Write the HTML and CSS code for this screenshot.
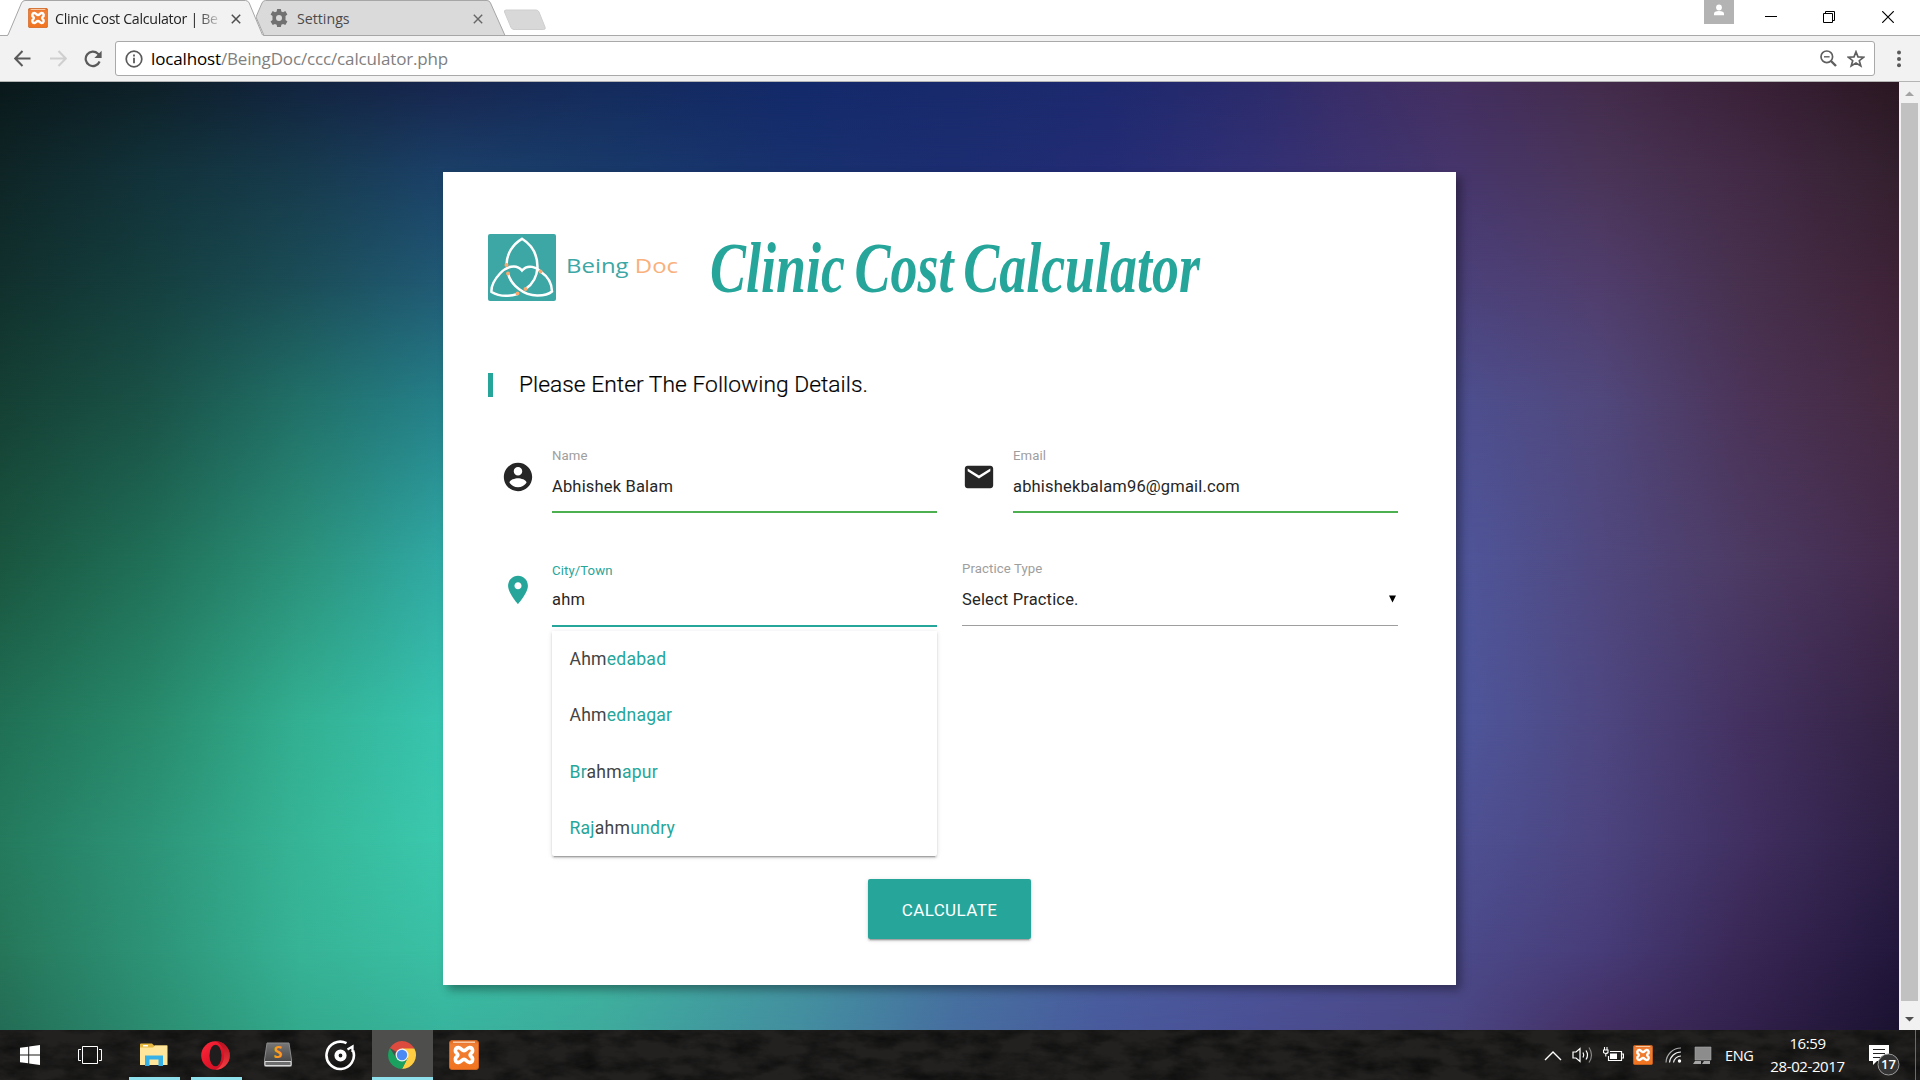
FILE: index.html
```html
<!DOCTYPE html>
<html lang="en">
<head>
<meta charset="utf-8">
<title>Clinic Cost Calculator | Being Doc</title>
<link rel="stylesheet" href="styles.css">
</head>
<body>
<svg class="defs" width="0" height="0">
  <defs>
    <linearGradient id="orange" x1="0" y1="0" x2="0" y2="1"><stop offset="0" stop-color="#e0661c"/><stop offset=".15" stop-color="#f08036"/><stop offset="1" stop-color="#f2741f"/></linearGradient>
    <linearGradient id="operaRed" x1="0" y1="0" x2="1" y2="1"><stop offset="0" stop-color="#ff2b3c"/><stop offset=".5" stop-color="#e3152a"/><stop offset="1" stop-color="#c40f22"/></linearGradient>
    <linearGradient id="operaIn" x1="0" y1="0" x2="0" y2="1"><stop offset="0" stop-color="#a80d1c"/><stop offset="1" stop-color="#ff4b4b"/></linearGradient>
    <linearGradient id="steel" x1="0" y1="0" x2="0" y2="1"><stop offset="0" stop-color="#777"/><stop offset="1" stop-color="#3c3c3c"/></linearGradient>
    <symbol id="xampp" viewBox="0 0 30 30">
      <rect x=".5" y=".5" width="29" height="29" rx="2.5" fill="url(#orange)" stroke="#c9601f"/>
      <path d="M4 2.2h22" stroke="#fbd3b4" stroke-width="1.4"/>
      <path d="M9.500 7.600C6 7.400 5.400 12 8.200 13.600Q9.400 15 8.200 16.400C5.400 18 6 22.600 9.500 22.400C12.500 22.200 12.500 19.400 15 19.400C17.500 19.400 17.500 22.200 20.500 22.400C24 22.600 24.600 18 21.800 16.400Q20.600 15 21.800 13.600C24.600 12 24 7.400 20.500 7.600C17.500 7.800 17.500 10.600 15 10.600C12.500 10.600 12.500 7.800 9.500 7.600Z" fill="none" stroke="#fff" stroke-width="3.600" stroke-linejoin="round"/>
    </symbol>
  </defs>
</svg>

<header class="browser">
  <div class="tabstrip">
    <div class="tab tab-active">
      <svg class="tab-shape" width="257" height="36" viewBox="0 0 257 36"><path d="M0 36L1 35L14.500 3Q15.700.5 18 .5H238.500Q241 .5 242.200 3L255.500 35L256.500 36Z" fill="#f2f2f2"/><path d="M0 35.500L1 35L14.500 3Q15.700.5 18 .5H238.500Q241 .5 242.200 3L255.500 35" fill="none" stroke="#a6a6a6"/></svg>
      <svg class="tab-icon" width="20" height="20"><use href="#xampp"/></svg>
      <span class="tab-title tab-fade">Clinic Cost Calculator | Be</span>
      <svg class="tab-close" width="10" height="10" viewBox="0 0 10 10"><path d="M.8.8L9.200 9.200M9.200.8L.8 9.200" stroke="#4e4e4e" stroke-width="1.500"/></svg>
    </div>
    <div class="tab tab-idle">
      <svg class="tab-shape" width="250" height="36" viewBox="0 0 250 36"><path d="M0 17L6 3Q7 .5 9.500 .5H231Q233.500 .5 234.500 3L249 35.500H8Z" fill="#dadada" stroke="#a6a6a6"/></svg>
      <svg class="tab-icon" width="18" height="18" viewBox="0 0 24 24"><path fill="#717171" fill-rule="evenodd" d="M9.500 0h5l.6 3.400 2.300 1 3-1.800 2.800 4.600L20.700 9.400v5.200l2.500 2.200-2.800 4.600-3-1.500-2.300 1.200L14.500 24h-5l-.6-2.900-2.300-1.200-3 1.500L.8 16.800l2.500-2.200V9.400L.8 7.200l2.800-4.600 3 1.800 2.300-1ZM12 8a4 4 0 1 0 0 8a4 4 0 1 0 0-8Z"/></svg>
      <span class="tab-title">Settings</span>
      <svg class="tab-close" width="10" height="10" viewBox="0 0 10 10"><path d="M.8.8L9.200 9.200M9.200.8L.8 9.200" stroke="#666" stroke-width="1.400"/></svg>
    </div>
    <svg class="new-tab" width="44" height="22" viewBox="0 0 44 22"><path d="M3 1H33Q35 1 36 3L42 18Q43 20.500 40.500 20.500H11Q9 20.500 8 18.500L1.500 3Q1 1 3 1Z" fill="#d8d8d8" stroke="#cecece"/></svg>
    <div class="window-buttons">
      <svg class="profile" width="30" height="24" viewBox="0 0 30 24"><path fill="#b3b3b3" d="M0 0h30v24H0z"/><circle cx="15" cy="7.500" r="2.900" fill="#fff"/><path d="M10 15.200V13.500Q10 11 15 11T20 13.500V15.200Z" fill="#fff"/></svg>
      <svg class="minimize" width="12" height="12" viewBox="0 0 12 12"><path d="M0 5.500H12" stroke="#000"/></svg>
      <svg class="restore" width="12" height="12" viewBox="0 0 12 12"><path d="M.5 2.500H9.500V11.500H.5ZM2.500 2.500V.5H11.500V9.500H9.500" fill="none" stroke="#000"/></svg>
      <svg class="close" width="12" height="12" viewBox="0 0 12 12"><path d="M.2.2L11.800 11.800M11.800.2L.2 11.800" stroke="#000" stroke-width="1.200"/></svg>
    </div>
  </div>
  <div class="toolbar">
    <svg class="nav-back" width="17" height="17" viewBox="0 0 17 17"><path d="M16.500 8.500H1.500M8.500 1L1.200 8.500L8.500 16" fill="none" stroke="#5a5a5a" stroke-width="2"/></svg>
    <svg class="nav-forward" width="17" height="17" viewBox="0 0 17 17"><path d="M0 8.500H15.500M8.500 1L15.800 8.500L8.500 16" fill="none" stroke="#cfcfcf" stroke-width="2"/></svg>
    <svg class="nav-reload" width="18" height="18" viewBox="0 0 18 18"><path d="M15.600 11.500A7.200 7.200 0 1 1 14 3.800L15.500 5.500" fill="none" stroke="#5a5a5a" stroke-width="2.200"/><path d="M17.600.8V8H10.400Z" fill="#5a5a5a"/></svg>
    <div class="omnibox">
      <svg class="info" width="18" height="18" viewBox="0 0 18 18"><circle cx="9" cy="9" r="7.800" fill="none" stroke="#5a5a5a" stroke-width="1.700"/><path d="M9 7.800V13.200M9 4.600V6.400" stroke="#5a5a5a" stroke-width="1.800"/></svg>
      <span class="url"><b>localhost</b>/BeingDoc/ccc/calculator.php</span>
      <svg class="zoom-out" width="17" height="17" viewBox="0 0 17 17"><circle cx="6.800" cy="6.800" r="5.800" fill="none" stroke="#5f5f5f" stroke-width="1.700"/><path d="M4 6.800H9.600" stroke="#5f5f5f" stroke-width="1.400"/><path d="M11 11L16 16" stroke="#5f5f5f" stroke-width="2.400"/></svg>
      <svg class="star" width="18" height="18" viewBox="0 0 18 18"><path d="M9 1.800L11 6.900L16.600 7.200L12.300 10.700L13.800 16L9 13.100L4.200 16L5.700 10.700L1.400 7.200L7 6.900Z" fill="none" stroke="#5f5f5f" stroke-width="1.700"/></svg>
    </div>
    <svg class="menu" width="4" height="18" viewBox="0 0 4 18"><g fill="#5a5a5a"><circle cx="2" cy="2.500" r="2"/><circle cx="2" cy="9" r="2"/><circle cx="2" cy="15.300" r="2"/></g></svg>
  </div>
</header>

<div class="viewport">
  <main class="page">
    <div class="sky sky-1"></div><div class="sky sky-2"></div><div class="sky sky-3"></div>
    <div class="sky sky-4"></div><div class="sky sky-5"></div><div class="sky sky-6"></div>
    <div class="sky sky-7"></div><div class="sky sky-8"></div><div class="sky sky-9"></div>
    <section class="card">
      <div class="brand">
        <svg class="logo" width="192" height="68" viewBox="0 0 192 68">
          <rect width="68" height="67" rx="2" fill="#3ca7a5"/>
          <g fill="none" stroke="#fff" stroke-width="2.500">
            <path d="M18.500 31C18.500 20 25 10 34 4.800C44 11 49.500 21 49.500 33C49 43 45 50 37.500 55"/>
            <path d="M20 39.500C23 51 36 62 50 61.500C56 61.500 61 60 64 57.500C64 49 59 42 52.500 37.500C49 33.500 40 29.500 34 36.500C28 29 18 33 12 39.500C6 46 3 52 3.500 58C11 62.500 21 62.500 29.500 60"/>
          </g>
          <g fill="#f9a870"><circle cx="18.500" cy="31" r="2"/><circle cx="20" cy="39.500" r="2"/><circle cx="52.500" cy="37.500" r="2"/><circle cx="37.500" cy="55" r="2"/><circle cx="29.500" cy="59.500" r="2"/></g>
          <text class="logo-name" x="78" y="38.500" textLength="112" lengthAdjust="spacingAndGlyphs">Being <tspan>Doc</tspan></text>
        </svg>
        <h1>
          <svg width="500" height="76" viewBox="0 0 500 76" class="title">
            <text x="3" y="61" textLength="490" lengthAdjust="spacingAndGlyphs">Clinic Cost Calculator</text>
          </svg>
        </h1>
      </div>
      <blockquote>Please Enter The Following Details.</blockquote>
      <form class="fields">
        <div class="field with-icon">
          <svg class="prefix" width="34" height="34" viewBox="0 0 24 24"><path fill="#262626" d="M12 2C6.480 2 2 6.480 2 12s4.480 10 10 10 10-4.480 10-10S17.520 2 12 2zm0 3c1.660 0 3 1.340 3 3s-1.340 3-3 3-3-1.340-3-3 1.340-3 3-3zm0 14.200c-2.500 0-4.710-1.280-6-3.220.03-1.990 4-3.080 6-3.080 1.990 0 5.970 1.090 6 3.080-1.290 1.940-3.500 3.220-6 3.220z"/></svg>
          <div class="control"><label>Name</label><div class="value valid">Abhishek Balam</div></div>
        </div>
        <div class="field with-icon">
          <svg class="prefix" width="34" height="34" viewBox="0 0 24 24"><path fill="#262626" d="M20 4H4c-1.100 0-1.990.9-1.990 2L2 18c0 1.100.9 2 2 2h16c1.100 0 2-.9 2-2V6c0-1.100-.9-2-2-2zm0 4l-8 5-8-5V6l8 5 8-5v2z"/></svg>
          <div class="control"><label>Email</label><div class="value valid">abhishekbalam96@gmail.com</div></div>
        </div>
        <div class="field with-icon">
          <svg class="prefix pin" width="34" height="34" viewBox="0 0 24 24"><path fill="#26a69a" d="M12 2C8.130 2 5 5.130 5 9c0 5.250 7 13 7 13s7-7.750 7-13c0-3.870-3.130-7-7-7zm0 9.500c-1.380 0-2.500-1.120-2.500-2.500s1.120-2.500 2.500-2.500 2.500 1.120 2.500 2.500-1.120 2.500-2.500 2.500z"/></svg>
          <div class="control active"><label>City/Town</label><div class="value focus">ahm</div>
            <ul class="suggestions">
              <li><b>Ahm</b>edabad</li>
              <li><b>Ahm</b>ednagar</li>
              <li>Br<b>ahm</b>apur</li>
              <li>Raj<b>ahm</b>undry</li>
            </ul>
          </div>
        </div>
        <div class="field">
          <div class="control select"><label>Practice Type</label><div class="value plain"><span>Select Practice.</span><svg width="7" height="8" viewBox="0 0 8 8"><path d="M0 0H8L4 8Z"/></svg></div></div>
        </div>
      </form>
      <button class="submit" type="button">CALCULATE</button>
    </section>
  </main>
  <div class="scrollbar">
    <svg width="21" height="21" viewBox="0 0 21 21"><path d="M6 14L10.500 9.500L15 14Z" fill="#a3a3a3"/></svg>
    <div class="thumb"></div>
    <svg class="arrow-down" width="21" height="21" viewBox="0 0 21 21"><path d="M6 8L10.500 12.500L15 8Z" fill="#505050"/></svg>
  </div>
</div>

<footer class="taskbar">
  <svg class="rock" width="1920" height="50"><filter id="grain" x="0" y="0" width="100%" height="100%"><feTurbulence type="fractalNoise" baseFrequency=".03 .07" numOctaves="5" seed="23"/><feColorMatrix values="0 0 0 0 0  0 0 0 0 0  0 0 0 0 0  1.800 0 0 0 -.65"/></filter><rect width="1920" height="50" filter="url(#grain)"/></svg>
  <div class="apps">
    <div class="app start"><svg width="20" height="20" viewBox="0 0 20 20"><path fill="#fff" d="M0 2.800L8.200 1.700V9.400H0ZM9.200 1.500L20 0V9.400H9.200ZM0 10.400H8.200V18.300L0 17.200ZM9.200 10.400H20V20L9.200 18.500Z"/></svg></div>
    <div class="app tasks"><svg width="24" height="20" viewBox="0 0 24 20"><path d="M4.500 1.500H19.500V18.500H4.500ZM3 4.500H.5V15.500H3M21 4.500H23.500V15.500H21" fill="none" stroke="#fff"/></svg></div>
    <div class="app open"><svg width="28" height="24" viewBox="0 0 28 24"><path fill="#e9b83e" d="M0 1.500Q0 .5 1 .5H12L14 2.500H27V8H0Z"/><path fill="#ffe69b" d="M0 4.500H13L15 2.500H27.500V22H0Z"/><path fill="#fff" d="M3 2H8V3.500H3Z"/><path fill="#36b1e8" d="M5 12.500H23V23H18.500V16.500H9.500V23H5Z"/></svg></div>
    <div class="app open"><svg width="29" height="29" viewBox="0 0 29 29"><ellipse cx="14.500" cy="14.500" rx="14.300" ry="14.300" fill="url(#operaRed)"/><path d="M14.500.2A14.300 14.300 0 0 1 14.500 28.800C26 24 26 5 14.500.2Z" fill="url(#operaIn)" opacity=".8"/><ellipse cx="14.500" cy="14.500" rx="6" ry="10.800" fill="#1f1d1d"/></svg></div>
    <div class="app"><svg class="sublime" width="28" height="26" viewBox="0 0 28 26"><path d="M3 1H25L27.500 18V23.500Q27.500 24.500 26.500 24.500H1.500Q.5 24.500.5 23.500V18Z" fill="url(#steel)" stroke="#8a8a8a"/><path d="M1 19.500H27V23.500H1Z" fill="#6d6d6d" stroke="#dadada"/><text x="14" y="15.500" text-anchor="middle" class="sublime-s">S</text></svg></div>
    <div class="app"><svg width="31" height="31" viewBox="0 0 31 31"><path d="M21.500 3.200A13.700 13.700 0 1 0 28 10.500" fill="none" stroke="#fff" stroke-width="2.600"/><circle cx="15.500" cy="15.500" r="4" fill="none" stroke="#fff" stroke-width="4.200"/><path d="M22.500 9.500L27.500 6.500V12" stroke="#fff" stroke-width="2.300" fill="none"/></svg></div>
    <div class="app current"><svg width="28" height="28" viewBox="0 0 28 28"><path d="M14 14L1.900 7A14 14 0 0 1 26.100 7Z" fill="#dd4b3e"/><path d="M14 14V7.500H26.400A14 14 0 0 1 14 28L19.500 17Z" fill="#ffcd42"/><path d="M14 14L19.600 17.300L14 28A14 14 0 0 1 1.900 7L8.300 17.300Z" fill="#1aa15f"/><circle cx="14" cy="14" r="6.500" fill="#f2f2f2"/><circle cx="14" cy="14" r="5.200" fill="#4a8af4"/></svg></div>
    <div class="app"><svg width="30" height="30"><use href="#xampp"/></svg></div>
  </div>
  <div class="tray">
    <svg class="t-up" width="18" height="11" viewBox="0 0 18 11"><path d="M1 10L9 2L17 10" fill="none" stroke="#fff" stroke-width="1.400"/></svg>
    <svg class="t-vol" width="22" height="20" viewBox="0 0 22 20"><path d="M1 7H4L8 3.500V16.500L4 13H1Z" fill="none" stroke="#fff" stroke-width="1.200"/><path d="M11 7.500Q12.500 10 11 12.500M14 5.500Q17 10 14 14.500" fill="none" stroke="#fff" stroke-width="1.200"/><path d="M17 2.500Q22 10 17 17.500" fill="none" stroke="#888" stroke-width="1.200"/></svg>
    <svg class="t-bat" width="21" height="16" viewBox="0 0 21 16"><path d="M7 4.500H18.500V13.500H5.500V9M19 7H20.500V11H19" fill="none" stroke="#fff" stroke-width="1.200"/><path d="M7 6.500H14V12H7Z" fill="#fff"/><path d="M1.500 0V2.500M4 0V2.500M.5 3H5V5.500Q3 7.500.5 5.500ZM2.800 7V9.500" fill="none" stroke="#fff" stroke-width="1.100"/></svg>
    <svg class="t-xampp" width="20" height="20"><use href="#xampp"/></svg>
    <svg class="t-wifi" width="17" height="16" viewBox="0 0 17 16"><g fill="none" stroke="#eee" stroke-width="1.200"><path d="M1 15.500A15 15 0 0 1 16 1" stroke="#aaa"/><path d="M4.500 15.500A11.500 11.500 0 0 1 16 5"/><path d="M8.500 15.500A7.500 7.500 0 0 1 16 9"/></g><circle cx="14.500" cy="14" r="1.700" fill="#fff"/></svg>
    <svg class="t-net" width="19" height="19" viewBox="0 0 19 19"><path d="M2 1H18V14H2Z" fill="#8c8c8c" stroke="#aaa" stroke-width=".6"/><path d="M2 15H8V18H0ZM11 15H17V18H9Z" fill="#a7a7a7"/></svg>
    <span class="lang">ENG</span>
    <div class="clock"><span>16:59</span><span>28-02-2017</span></div>
    <svg class="t-note" width="32" height="32" viewBox="0 0 32 32"><path d="M1 1H21V17H9L5 21V17H1Z" fill="#fff"/><path d="M5 5.500H17M5 9.500H17M5 13.500H12" stroke="#222" stroke-width="1.200"/><circle cx="20.500" cy="20.500" r="10.500" fill="#343434" stroke="#9a9a9a"/><text x="20.500" y="25" text-anchor="middle" class="badge">17</text></svg>
    <div class="peek"></div>
  </div>
</footer>
</body>
</html>
```
FILE: styles.css
```css
* { box-sizing: border-box; }
body { margin: 0; width: 1920px; height: 1080px; overflow: hidden; display: flex; flex-direction: column; font-family: Roboto, sans-serif; background: #fff; }
svg { display: block; flex: none; }
.defs { position: absolute; }

/* browser chrome */
.browser { height: 82px; flex: none; font-family: "Open Sans", sans-serif; }
.tabstrip { height: 36px; display: flex; align-items: flex-start; border-bottom: 1px solid #a9a9a9; padding-left: 7px; }
.tab { height: 36px; display: flex; align-items: center; position: relative; }
.tab > * { position: relative; }
.tab .tab-shape { position: absolute; left: 0; top: 0; }
.tab-active { width: 249px; padding: 0 0 0 21px; z-index: 1; }
.tab-idle { width: 247px; padding-left: 14px; }
.tab-title { font-size: 14.200px; line-height: 20px; margin-left: 7px; color: #222; white-space: nowrap; letter-spacing: -.3px; }
.tab-active .tab-title { width: 167px; }
.tab-idle .tab-title { width: 167px; margin-left: 9px; padding-top: 1px; color: #4a4a4a; letter-spacing: 0; }
.tab-fade { padding-top: 1px; -webkit-mask: linear-gradient(90deg, #000 142px, transparent 168px); mask: linear-gradient(90deg, #000 142px, transparent 168px); }
.tab-close { margin-left: 9px; margin-top: 2px; }
.new-tab { margin-top: 9px; }
.window-buttons { margin-left: auto; display: flex; align-items: flex-start; padding-right: 26px; }
.minimize { margin: 11px 0 0 31px; }
.restore { margin: 11px 0 0 46px; }
.close { margin: 11px 0 0 47px; }
.toolbar { height: 46px; display: flex; align-items: center; background: #f2f2f2; border-bottom: 1px solid #b4b4b4; padding: 0 19px 0 14px; }
.nav-forward { margin-left: 19px; }
.nav-reload { margin-left: 17px; }
.omnibox { flex: 1; height: 35px; margin: 0 22px 0 13px; display: flex; align-items: center; background: #fff; border: 1px solid #a9a9a9; border-radius: 3px; padding: 0 9px 0 9px; }
.url { margin-left: 8px; font-size: 17px; letter-spacing: -.15px; color: #808080; flex: 1; line-height: 24px; }
.url b { font-weight: 400; color: #000; }
.star { margin-left: 10px; }

/* page */
.viewport { height: 948px; flex: none; display: flex; }
.page { width: 1899px; position: relative; display: flex; justify-content: center; align-items: flex-start; padding-top: 90px; overflow: hidden; }

/* backdrop: horizontal ramps, each faded in from the one above it */
.sky { position: absolute; inset: 0; -webkit-mask: linear-gradient(transparent var(--from), #000 var(--to)); mask: linear-gradient(transparent var(--from), #000 var(--to)); }
.sky-1 { -webkit-mask: none; mask: none; background: linear-gradient(90deg, #0a191b, #0e2028 150px, #122440 300px, #17264f 443px, #142b5c 600px, #13296a 800px, #182a6c 950px, #1d296e 1100px, #2a2b6c 1250px, #3a2e68 1350px, #432f60 1456px, #432c4c 1600px, #3a2138 1750px, #2a1722); }
.sky-2 { --from: 0px; --to: 90px; background: linear-gradient(90deg, #0f2526, #12323a 150px, #173a4c 300px, #1b4068 443px, #193a6a 600px, #18316e 800px, #1c2d70 950px, #232c74 1100px, #323075 1250px, #46356b 1456px, #4a3558 1600px, #422a45 1750px, #33202e); }
.sky-3 { --from: 90px; --to: 200px; background: linear-gradient(90deg, #11302d, #153f3f 150px, #1b4d57 300px, #215a75 443px, #4b417a 1456px, #503d6c 1600px, #46304c 1750px, #3e2236); }
.sky-4 { --from: 200px; --to: 320px; background: linear-gradient(90deg, #154034, #1a5247 150px, #217068 300px, #25808a 443px, #4d4f90 1456px, #51487c 1600px, #4b3357 1750px, #44293f); }
.sky-5 { --from: 320px; --to: 480px; background: linear-gradient(90deg, #1a5640, #207058 150px, #2b917a 300px, #31aaa5 443px, #4f569b 1456px, #50487f 1600px, #4c3a62 1750px, #42294a); }
.sky-6 { --from: 480px; --to: 640px; background: linear-gradient(90deg, #207055, #288a6b 150px, #33b092 300px, #38c5b0 443px, #4e579c 1456px, #4e4781 1600px, #43305f 1750px, #342242); }
.sky-7 { --from: 640px; --to: 760px; background: linear-gradient(90deg, #247a5d, #2d9478 150px, #36b596 300px, #3bc9ae 443px, #4e5194 1456px, #4c447f 1600px, #402f60 1750px, #2c1e42); }
.sky-8 { --from: 760px; --to: 870px; background: linear-gradient(90deg, #267659, #2d9377 150px, #37b396 300px, #3ac0a5 443px, #3fb6a0 600px, #4495a0 800px, #4775a0 950px, #4a5f9f 1100px, #4c5498 1250px, #4c4a8a 1456px, #473c78 1600px, #382653 1750px, #22173c); }
.sky-9 { --from: 870px; --to: 948px; background: linear-gradient(90deg, #236c55, #2b8c70 150px, #33a98c 300px, #38b49d 443px, #3eaa9c 600px, #438d9f 800px, #466f9f 950px, #485a9c 1100px, #4a5094 1250px, #4a4683 1456px, #432e62 1600px, #30204a 1750px, #1b1230); }

.card { position: relative; width: 1013px; height: 813px; background: #fff; padding: 62px 45px 0; display: flex; flex-direction: column; align-items: stretch; box-shadow: 5px 5px 9px rgba(0, 0, 0, .35); }
.brand { height: 68px; display: flex; }
.logo, .title { overflow: visible; }
.logo-name { font-family: "Open Sans", sans-serif; font-size: 20.500px; fill: #3ca7a5; }
.logo-name tspan { fill: #f9b07c; }
h1 { margin: -3px 0 0 27px; font-weight: 400; }
.title text { font-family: "Liberation Serif", serif; font-size: 71px; font-style: italic; font-weight: 700; word-spacing: -5px; fill: #26a69a; }
blockquote { margin: 71px 0 0; height: 24px; border-left: 5px solid #26a69a; padding-left: 26px; font-size: 22.800px; font-weight: 300; line-height: 24px; letter-spacing: .03px; color: #000; white-space: nowrap; -webkit-text-stroke: .2px #000; }
.fields { margin: 49px 0 0; padding: 0 13.500px 0 12.500px; display: grid; grid-template-columns: 1fr 1fr; column-gap: 25px; grid-template-rows: 114px 68px; }
.field { display: flex; }
.prefix { margin: 14px 17px 0 .5px; }
.pin { margin-top: 13px; }
.control { flex: 1; position: relative; }
label { display: block; height: 20px; font-size: 13.200px; line-height: 20px; letter-spacing: .1px; color: #9e9e9e; }
.value { height: 47px; font-size: 16.500px; line-height: 42px; letter-spacing: .17px; color: #262626; }
.valid { border-bottom: 2px solid #4caf50; }
.active label { height: 19px; color: #26a69a; line-height: 21px; }
.focus { height: 48px; border-bottom: 2px solid #26a69a; }
.select { margin-top: -2px; padding-left: .5px; }
.select label { height: 21px; line-height: 21px; }
.plain { border-bottom: 1px solid #9e9e9e; display: flex; justify-content: space-between; }
.plain svg { margin: 16px 2px 0 0; }
.suggestions { position: absolute; top: 71px; left: 0; right: 0; margin: 0; padding: 0; list-style: none; background: #fff; border-radius: 0 0 2px 2px; box-shadow: 0 2px 2px 0 rgba(0, 0, 0, .14), 0 1px 5px 0 rgba(0, 0, 0, .12), 0 3px 1px -2px rgba(0, 0, 0, .2); }
.suggestions li { height: 56.300px; padding: 0 17.500px; line-height: 56px; font-size: 17.600px; letter-spacing: .22px; color: #26a69a; }
.suggestions b { font-weight: 400; color: #444; }
.submit { align-self: center; margin-top: 251px; width: 163px; height: 60px; border: 0; border-radius: 2px; background: #26a69a; color: #fff; font: 400 17px/62px Roboto, sans-serif; letter-spacing: .4px; padding: 0; box-shadow: 0 2px 2px 0 rgba(0, 0, 0, .14), 0 1px 5px 0 rgba(0, 0, 0, .12), 0 3px 1px -2px rgba(0, 0, 0, .2); }

.scrollbar { width: 21px; background: #f1f1f1; display: flex; flex-direction: column; align-items: center; }
.thumb { width: 17px; flex: 1; background: #c1c1c1; }
.arrow-down { margin-top: 8px; }

/* taskbar */
.taskbar { height: 50px; flex: none; position: relative; display: flex; justify-content: space-between; background: #222120; color: #fff; font-family: "Open Sans", sans-serif; }
.rock { position: absolute; left: 0; top: 0; opacity: .6; }
.apps, .tray { position: relative; display: flex; }
.app { width: 51px; height: 50px; margin-right: 11px; display: flex; align-items: center; justify-content: center; border-bottom: 3px solid transparent; padding: 3px 1px 0 0; }
.apps .start { width: 40px; margin: 0 10px; padding-right: 0; }
.apps .tasks { width: 60px; margin: 0 9px 0 0; padding-right: 0; }
.app.open { border-bottom-color: #8ee0ec; }
.apps .app:nth-child(4) { padding-right: 2px; }
.apps .app:nth-child(5) { margin-right: 11px; padding-right: 2px; }
.apps .app:nth-child(6) { margin-right: 6px; padding-right: 1px; }
.apps .current { width: 61px; background: #4e4e4d; border-bottom-color: #8ee0ec; margin-right: 6px; padding-right: 1px; }
.sublime-s { font: 700 16px "Open Sans", sans-serif; fill: #ff9a1e; }
.tray { align-items: center; }
.t-vol { margin-left: 10px; }
.t-bat { margin-left: 9px; }
.t-xampp { margin-left: 9px; }
.t-wifi { margin-left: 12px; }
.t-net { margin-left: 11px; }
.lang { margin-left: 13px; width: 32px; font-size: 14.500px; letter-spacing: -.3px; }
.clock { width: 100px; margin-left: 1px; display: flex; flex-direction: column; align-items: center; font-size: 15px; line-height: 23px; letter-spacing: -.4px; padding-right: 1px; }
.t-note { margin: 10px 0 0 10px; }
.badge { font: 600 13px "Open Sans", sans-serif; fill: #fff; }
.peek { width: 5px; height: 50px; margin-left: 15px; border-left: 1px solid #6b6b6b; }
```
